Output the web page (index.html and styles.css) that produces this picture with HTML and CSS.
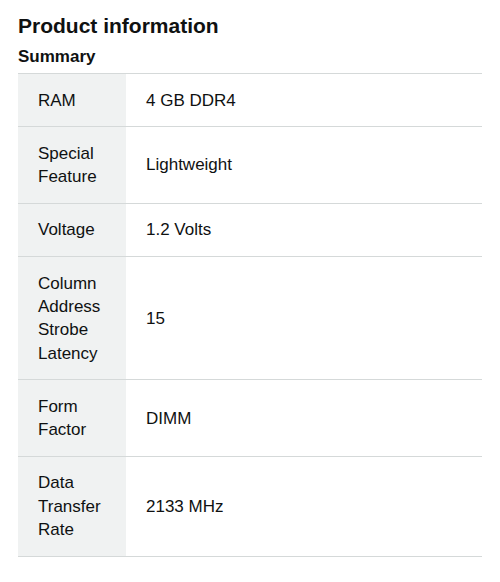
FILE: index.html
```html
<!DOCTYPE html>
<html>
<head>
<meta charset="utf-8">
<link rel="stylesheet" href="styles.css">
</head>
<body>
<div class="page">
  <h2 class="title">Product information</h2>
  <h3 class="subtitle">Summary</h3>
  <table class="specs">
    <tr><th>RAM</th><td>4 GB DDR4</td></tr>
    <tr><th>Special Feature</th><td>Lightweight</td></tr>
    <tr><th>Voltage</th><td>1.2 Volts</td></tr>
    <tr><th>Column Address Strobe Latency</th><td>15</td></tr>
    <tr><th>Form Factor</th><td>DIMM</td></tr>
    <tr><th>Data Transfer Rate</th><td>2133 MHz</td></tr>
  </table>
</div>
</body>
</html>
```
FILE: styles.css
```css
html, body {
  margin: 0;
  padding: 0;
  background: #ffffff;
}
.page {
  padding: 0 18px;
  font-family: "Liberation Sans", Arial, sans-serif;
  color: #0f1111;
}
.title {
  font-size: 21px;
  line-height: 28px;
  font-weight: 700;
  margin: 12px 0 0;
}
.subtitle {
  font-size: 17px;
  line-height: 22px;
  font-weight: 700;
  margin: 6px 0 5px;
}
.specs {
  width: 100%;
  border-collapse: collapse;
  font-size: 17px;
  line-height: 23.3px;
}
.specs tr {
  border-top: 1px solid #d5d9d9;
  border-bottom: 1px solid #d5d9d9;
}
.specs th {
  width: 68px;
  background: #f0f2f2;
  font-weight: 400;
  text-align: left;
  padding: 14.5px 20px;
  vertical-align: middle;
}
.specs td {
  padding: 14.5px 20px;
  vertical-align: middle;
}
```
